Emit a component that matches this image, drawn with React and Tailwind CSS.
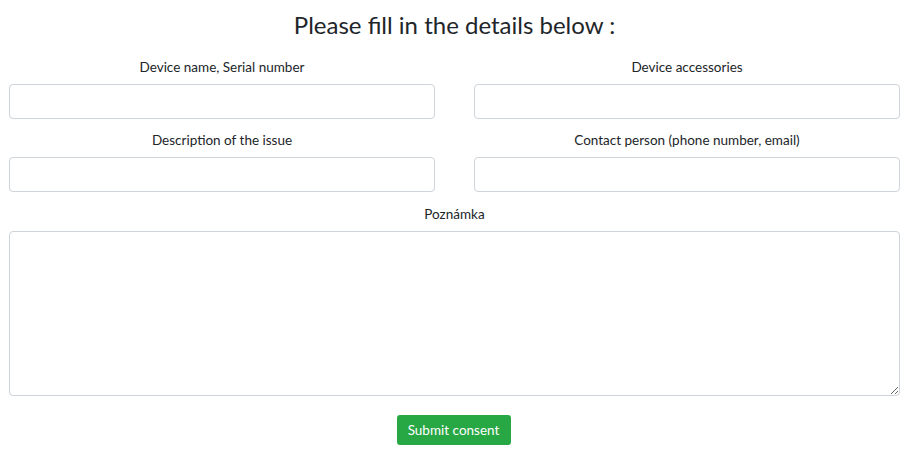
export default function App() {
  const fields = [
    ['Device name, Serial number', 'Device accessories'],
    ['Description of the issue', 'Contact person (phone number, email)'],
  ]
  return (
    <div className="w-[906px] h-[458px] bg-white pl-[9px] pr-[6px] pt-[7px] text-[#212529]" style={{ fontFamily: 'Lato, "Noto Sans", sans-serif' }}>
      <h1 className="text-center text-[24px] leading-[36px] font-normal mb-[14px]">Please fill in the details below :</h1>
      {fields.map((row, i) => (
        <div key={i} className="grid grid-cols-2 gap-x-[39px] mb-[11px]">
          {row.map(label => (
            <div key={label} className="flex flex-col">
              <label className="text-center text-[13.5px] leading-[20px] mb-[7px]">{label}</label>
              <input type="text" className="h-[35px] rounded-[4px] border border-[#ced4da] bg-white px-3 outline-none" />
            </div>
          ))}
        </div>
      ))}
      <div className="flex flex-col pt-[1px]">
        <label className="text-center text-[13.5px] leading-[20px] mb-[7px]">Poznámka</label>
        <textarea className="h-[165px] rounded-[4px] border border-[#ced4da] bg-white px-3 py-1 outline-none" />
      </div>
      <div className="flex justify-center mt-[19px]">
        <button type="button" className="w-[114px] h-[30px] rounded-[3px] bg-[#28a745] text-white text-[13.5px] -translate-x-[1px]">Submit consent</button>
      </div>
    </div>
  )
}
